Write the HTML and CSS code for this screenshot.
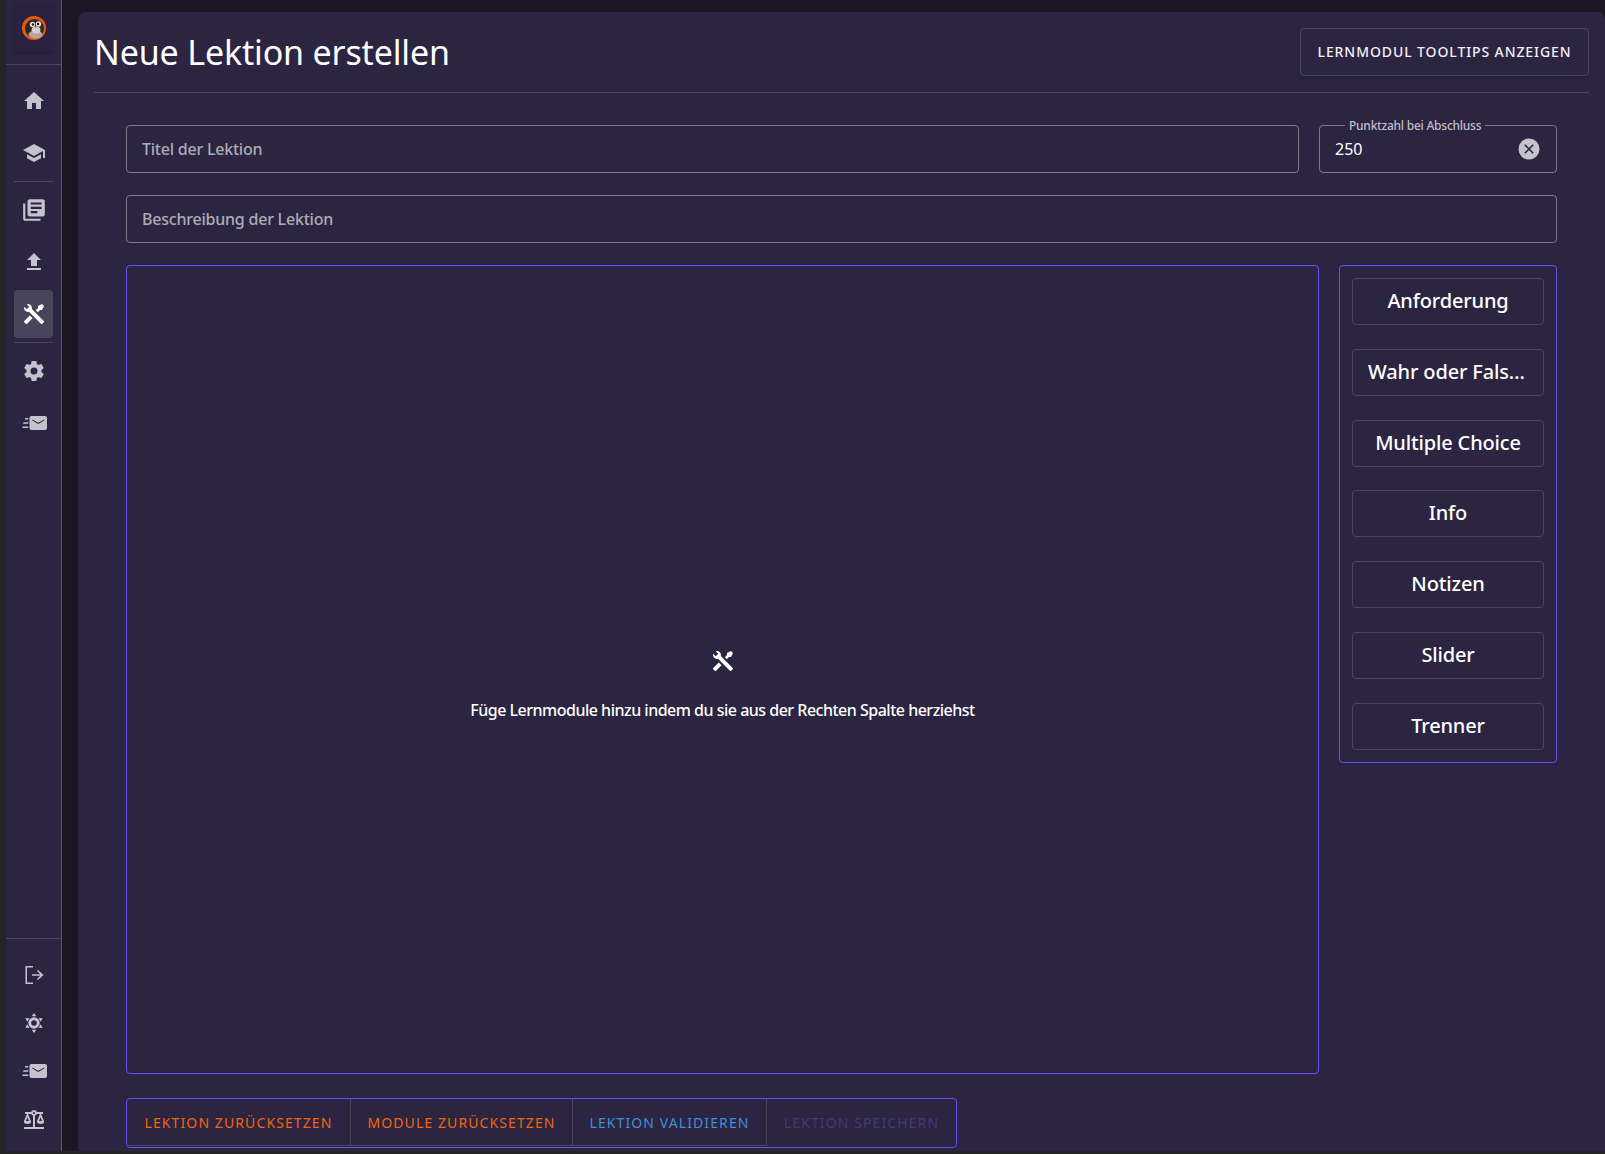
FILE: index.html
```html
<!DOCTYPE html>
<html lang="de">
<head>
<meta charset="utf-8">
<title>Neue Lektion erstellen</title>
<link rel="stylesheet" href="styles.css">
</head>
<body>
<div class="app">
  <nav class="sidebar">
    <div class="nav-top">
      <div class="logo-box">
        <svg class="logo" viewBox="0 0 24 24"><circle cx="12" cy="12" r="12" fill="#e8590c"/><circle cx="12.500" cy="12.500" r="9.500" fill="#2f2726"/><ellipse cx="13.500" cy="18.500" rx="7" ry="4" fill="#b5a49f"/><ellipse cx="14" cy="14" rx="4.500" ry="3.500" fill="#d8cfc8"/><circle cx="10.500" cy="8.500" r="2.700" fill="#e4dfd8"/><circle cx="16.500" cy="8" r="2.700" fill="#e4dfd8"/><circle cx="11" cy="8.500" r="1.200" fill="#16110f"/><circle cx="16" cy="8" r="1.200" fill="#16110f"/><path d="M12.300 10.500h2.600l-1.300 2.300z" fill="#d99a3a"/></svg>
      </div>
    </div>
    <div class="nav-group">
      <a class="nav-item"><svg viewBox="0 0 24 24"><path d="M10,20V14H14V20H19V12H22L12,3L2,12H5V20H10Z"/></svg></a>
      <a class="nav-item"><svg viewBox="0 0 24 24"><path d="M12,3L1,9L12,15L21,10.09V17H23V9M5,13.18V17.18L12,21L19,17.18V13.18L12,17L5,13.18Z"/></svg></a>
      <hr class="nav-rule">
      <a class="nav-item"><svg class="icon-large" viewBox="0 0 24 24"><path d="M4 6H2v14c0 1.100.9 2 2 2h14v-2H4V6zm16-4H8c-1.100 0-2 .9-2 2v12c0 1.100.9 2 2 2h12c1.100 0 2-.9 2-2V4c0-1.100-.9-2-2-2zm-1 9H9V9h10v2zm-4 4H9v-2h6v2zm4-8H9V5h10v2z"/></svg></a>
      <a class="nav-item"><svg viewBox="0 0 24 24"><path d="M9,16V10H5L12,3L19,10H15V16H9M5,20V18H19V20H5Z"/></svg></a>
      <a class="nav-item is-active"><svg viewBox="0 0 24 24"><path d="M21.71 20.29L20.29 21.71A1 1 0 0 1 18.88 21.71L7 9.85A3.81 3.81 0 0 1 6 10A4 4 0 0 1 2.22 4.7L4.76 7.24L5.29 6.71L6.71 5.29L7.24 4.76L4.7 2.22A4 4 0 0 1 10 6A3.81 3.81 0 0 1 9.85 7L21.71 18.88A1 1 0 0 1 21.71 20.29M2.29 18.88A1 1 0 0 0 2.29 20.29L3.71 21.71A1 1 0 0 0 5.12 21.71L10.59 16.25L7.76 13.42M20 2L16 4V6L13.83 8.17L15.83 10.17L18 8H20L22 4Z"/></svg></a>
      <hr class="nav-rule">
      <a class="nav-item"><svg viewBox="0 0 24 24"><path d="M12,15.5A3.5,3.5 0 0,1 8.5,12A3.5,3.5 0 0,1 12,8.5A3.5,3.5 0 0,1 15.5,12A3.5,3.5 0 0,1 12,15.5M19.43,12.97C19.47,12.65 19.5,12.33 19.5,12C19.5,11.67 19.47,11.34 19.43,11L21.54,9.37C21.73,9.22 21.78,8.95 21.66,8.73L19.66,5.27C19.54,5.05 19.27,4.96 19.05,5.05L16.56,6.05C16.04,5.66 15.5,5.32 14.87,5.07L14.5,2.42C14.46,2.18 14.25,2 14,2H10C9.75,2 9.54,2.18 9.5,2.42L9.13,5.07C8.5,5.32 7.96,5.66 7.44,6.05L4.95,5.05C4.73,4.96 4.46,5.05 4.34,5.27L2.34,8.73C2.21,8.95 2.27,9.22 2.46,9.37L4.57,11C4.53,11.34 4.5,11.67 4.5,12C4.5,12.33 4.53,12.65 4.57,12.97L2.46,14.63C2.27,14.78 2.21,15.05 2.34,15.27L4.34,18.73C4.46,18.95 4.73,19.03 4.95,18.95L7.44,17.94C7.96,18.34 8.5,18.68 9.13,18.93L9.5,21.58C9.54,21.82 9.75,22 10,22H14C14.25,22 14.46,21.82 14.5,21.58L14.87,18.93C15.5,18.67 16.04,18.34 16.56,17.94L19.05,18.95C19.27,19.03 19.54,18.95 19.66,18.73L21.66,15.27C21.78,15.05 21.73,14.78 21.54,14.63L19.43,12.97Z"/></svg></a>
      <a class="nav-item"><svg viewBox="0 0 24 24"><path d="M9.500 5H23a2 2 0 0 1 2 2v10a2 2 0 0 1-2 2H9.500a2 2 0 0 1-2-2V7a2 2 0 0 1 2-2zM10.300 8.500v1.100l6 3.300 6-3.300V8.500l-6 3.300zM3 7h3.300v1.400H3zM1.300 11.300h5v1.400h-5zM.5 15.600h5.800V17H.5z" fill-rule="evenodd"/></svg></a>
    </div>
    <div class="nav-bottom">
      <a class="nav-item"><svg viewBox="0 0 24 24"><path d="M3.500 3H11v1.500H5v15h6V21H3.500zM16 7l5.500 5-5.500 5-1-1 3.200-3.200H10v-1.600h8.200L15 8z"/></svg></a>
      <a class="nav-item"><svg viewBox="0 0 24 24"><path d="M12 6.300a5.700 5.700 0 1 1 0 11.400 5.700 5.700 0 0 1 0-11.400zm0 2.900a2.800 2.800 0 1 0 0 5.600 2.800 2.800 0 0 0 0-5.600zM12 2l2.300 3.300H9.700zM12 22l-2.300-3.300h4.600zM3.400 7l4.100.3-2.300 3.500zM20.600 7l-1.800 3.800-2.300-3.500zM3.400 17l1.800-3.800 2.300 3.500zM20.600 17l-4.100-.3 2.300-3.500z" fill-rule="evenodd"/></svg></a>
      <a class="nav-item"><svg viewBox="0 0 24 24"><path d="M9.500 5H23a2 2 0 0 1 2 2v10a2 2 0 0 1-2 2H9.500a2 2 0 0 1-2-2V7a2 2 0 0 1 2-2zM10.300 8.500v1.100l6 3.300 6-3.300V8.500l-6 3.300zM3 7h3.300v1.400H3zM1.300 11.300h5v1.400h-5zM.5 15.600h5.800V17H.5z" fill-rule="evenodd"/></svg></a>
      <a class="nav-item"><svg viewBox="0 0 24 24"><path d="M12,3C10.73,3 9.6,3.8 9.18,5H3V7H4.95L2,14C1.53,16 3,17 5.5,17C8,17 9.56,16 9,14L6.05,7H9.17C9.5,7.85 10.15,8.5 11,8.83V20H2V22H22V20H13V8.82C13.85,8.5 14.5,7.85 14.82,7H17.95L15,14C14.53,16 16,17 18.5,17C21,17 22.56,16 22,14L19.05,7H21V5H14.83C14.4,3.8 13.27,3 12,3M12,5A1,1 0 0,1 13,6A1,1 0 0,1 12,7A1,1 0 0,1 11,6A1,1 0 0,1 12,5M5.500,10.25L7,14H4L5.500,10.25M18.500,10.25L20,14H17L18.500,10.25Z"/></svg></a>
    </div>
  </nav>

  <main class="main">
    <header class="page-head">
      <h1 class="page-title">Neue Lektion erstellen</h1>
      <button class="btn-tooltips">LERNMODUL TOOLTIPS ANZEIGEN</button>
    </header>
    <section class="editor">
      <div class="row-title">
        <div class="field field-grow"><span class="placeholder">Titel der Lektion</span></div>
        <div class="field field-score">
          <span class="float-label">Punktzahl bei Abschluss</span>
          <span class="value">250</span>
          <svg class="clear" viewBox="0 0 22 22"><circle cx="11" cy="11" r="10.500" fill="#c4c2cc"/><path d="M6.800 6.800l8.400 8.400M15.200 6.800l-8.400 8.400" stroke="#2b2542" stroke-width="1.600" fill="none"/></svg>
        </div>
      </div>
      <div class="field"><span class="placeholder">Beschreibung der Lektion</span></div>
      <div class="workspace">
        <div class="dropzone">
          <svg class="drop-icon" viewBox="0 0 24 24"><path d="M21.71 20.29L20.29 21.71A1 1 0 0 1 18.88 21.71L7 9.85A3.81 3.81 0 0 1 6 10A4 4 0 0 1 2.22 4.7L4.76 7.24L5.29 6.71L6.71 5.29L7.24 4.76L4.7 2.22A4 4 0 0 1 10 6A3.81 3.81 0 0 1 9.85 7L21.71 18.88A1 1 0 0 1 21.71 20.29M2.29 18.88A1 1 0 0 0 2.29 20.29L3.71 21.71A1 1 0 0 0 5.12 21.71L10.59 16.25L7.76 13.42M20 2L16 4V6L13.83 8.17L15.83 10.17L18 8H20L22 4Z"/></svg>
          <p class="drop-text">Füge Lernmodule hinzu indem du sie aus der Rechten Spalte herziehst</p>
        </div>
        <aside class="palette">
          <div class="module">Anforderung</div>
          <div class="module">Wahr oder Falsch</div>
          <div class="module">Multiple Choice</div>
          <div class="module">Info</div>
          <div class="module">Notizen</div>
          <div class="module">Slider</div>
          <div class="module">Trenner</div>
        </aside>
      </div>
      <div class="actions">
        <button class="action action-warn">LEKTION ZURÜCKSETZEN</button>
        <button class="action action-warn">MODULE ZURÜCKSETZEN</button>
        <button class="action action-info">LEKTION VALIDIEREN</button>
        <button class="action action-off">LEKTION SPEICHERN</button>
      </div>
    </section>
  </main>
</div>
</body>
</html>
```
FILE: styles.css
```css
* { box-sizing: border-box; }
html, body { margin: 0; height: 100%; }
body {
  background: #252525;
  font-family: "Noto Sans", "Open Sans", sans-serif;
  color: #fff;
  overflow: hidden;
}
.app {
  display: flex;
  height: 1151px;
  margin-left: 6px;
  background: #1a1625;
}
.sidebar {
  width: 56px;
  flex: none;
  background: #2b2542;
  border-right: 1px solid #5c5868;
  display: flex;
  flex-direction: column;
}
.nav-top {
  padding: 4px 8px 12px;
  border-bottom: 1px solid #4a4658;
  height: 65px;
}
.logo-box {
  width: 39px;
  height: 48px;
  border-radius: 4px;
  background: #29233f;
  box-shadow: 0 1px 3px rgba(0, 0, 0, .25);
  display: flex;
  align-items: center;
  justify-content: center;
}
.logo { width: 24px; height: 24px; }
.nav-group {
  flex: 1;
  padding: 12px 8px 0;
  display: flex;
  flex-direction: column;
  gap: 3px;
}
.nav-item {
  width: 39px;
  height: 48px;
  border-radius: 4px;
  display: flex;
  align-items: center;
  justify-content: center;
  flex: none;
}
.nav-item svg { width: 24px; height: 24px; fill: #c4c2cc; overflow: visible; }
.nav-item svg.icon-large { width: 26px; height: 26px; }
.nav-item:nth-child(2) { margin-top: 1px; margin-bottom: -1px; }
.nav-rule + .nav-item { margin-top: -1px; margin-bottom: 1px; }
.nav-item.is-active { background: #484459; margin-top: 1px; margin-bottom: -1px; }
.nav-item.is-active svg { fill: #fff; }
.nav-rule {
  margin: 2px 0;
  border: 0;
  border-top: 1px solid #4a4658;
  width: 39px;
}
.nav-bottom {
  border-top: 1px solid #4a4658;
  height: 213px;
  padding: 12px 8px 0;
  display: flex;
  flex-direction: column;
}
.nav-bottom .nav-item { margin: 0; }

.main {
  flex: 1;
  margin: 12px 0 0 16px;
  background: #2b2542;
  border-radius: 8px 8px 0 0;
  display: flex;
  flex-direction: column;
  min-width: 0;
}
.page-head {
  margin: 0 16px;
  padding-top: 16px;
  height: 81px;
  border-bottom: 1px solid #4a4658;
  display: flex;
  justify-content: space-between;
  align-items: flex-start;
}
.page-title {
  margin: 0;
  font-size: 34px;
  font-weight: 400;
  line-height: 48px;
  letter-spacing: -.16px;
}
.btn-tooltips {
  width: 289px;
  height: 48px;
  padding: 0 0 2px;
  border: 1px solid #4a4658;
  border-radius: 4px;
  background: #2b2542;
  color: #f1f0f4;
  font: 500 14px "Noto Sans", sans-serif;
  letter-spacing: .9px;
  box-shadow: 0 2px 4px rgba(0, 0, 0, .2);
}
.editor {
  padding: 32px 48px 0;
  display: flex;
  flex-direction: column;
  gap: 22px;
}
.row-title { display: flex; gap: 20px; }
.field {
  height: 48px;
  border: 1px solid #7d7a88;
  border-radius: 4px;
  padding: 0 15px;
  display: flex;
  align-items: center;
  position: relative;
  font-size: 16px;
}
.field-grow { flex: 1; }
.field-score { width: 238px; flex: none; }
.placeholder { color: #aeacb6; font-weight: 500; letter-spacing: -.22px; }
.value { flex: 1; }
.float-label {
  position: absolute;
  top: -8px;
  left: 25px;
  padding: 0 4px;
  background: #2b2542;
  font-size: 12px;
  font-weight: 500;
  line-height: 16px;
  letter-spacing: -.24px;
  color: #c0bec8;
  white-space: nowrap;
}
.clear { width: 22px; height: 22px; margin-right: 1px; }
.workspace { display: flex; gap: 20px; align-items: flex-start; }
.dropzone {
  flex: 1;
  height: 809px;
  border: 1px solid #6850ee;
  border-radius: 4px;
  padding-top: 32px;
  display: flex;
  flex-direction: column;
  align-items: center;
  justify-content: center;
}
.drop-icon { width: 24px; height: 24px; fill: #fff; }
.drop-text {
  margin: 25px 0 0;
  font-size: 16px;
  font-weight: 500;
  line-height: 24px;
  letter-spacing: -.5px;
}
.palette {
  width: 218px;
  flex: none;
  border: 1px solid #6850ee;
  border-radius: 4px;
  padding: 12px;
  display: flex;
  flex-direction: column;
  gap: 23.8px;
}
.module {
  height: 47px;
  border: 1px solid #4a4658;
  border-radius: 4px;
  padding: 0 15px;
  line-height: 43px;
  text-align: center;
  font-size: 20px;
  font-weight: 500;
  letter-spacing: -.15px;
  white-space: nowrap;
  overflow: hidden;
  text-overflow: ellipsis;
}
.actions {
  align-self: flex-start;
  display: grid;
  grid-template-columns: 224px 222px 194px 189px;
  height: 50px;
  margin-top: 2px;
  border: 1px solid #6850ee;
  border-radius: 4px;
}
.action {
  height: 47px;
  padding: 0;
  border: 0;
  border-right: 1px solid #4a4658;
  border-bottom: 1px solid #4a4658;
  background: none;
  font: 400 14px "Noto Sans", sans-serif;
  letter-spacing: 1.1px;
}
.action:last-child { border-right: 0; border-bottom: 0; }
.action-warn { color: #f0650e; }
.action-info { color: #3f8fd8; }
.action-off { color: #433a72; }
```
